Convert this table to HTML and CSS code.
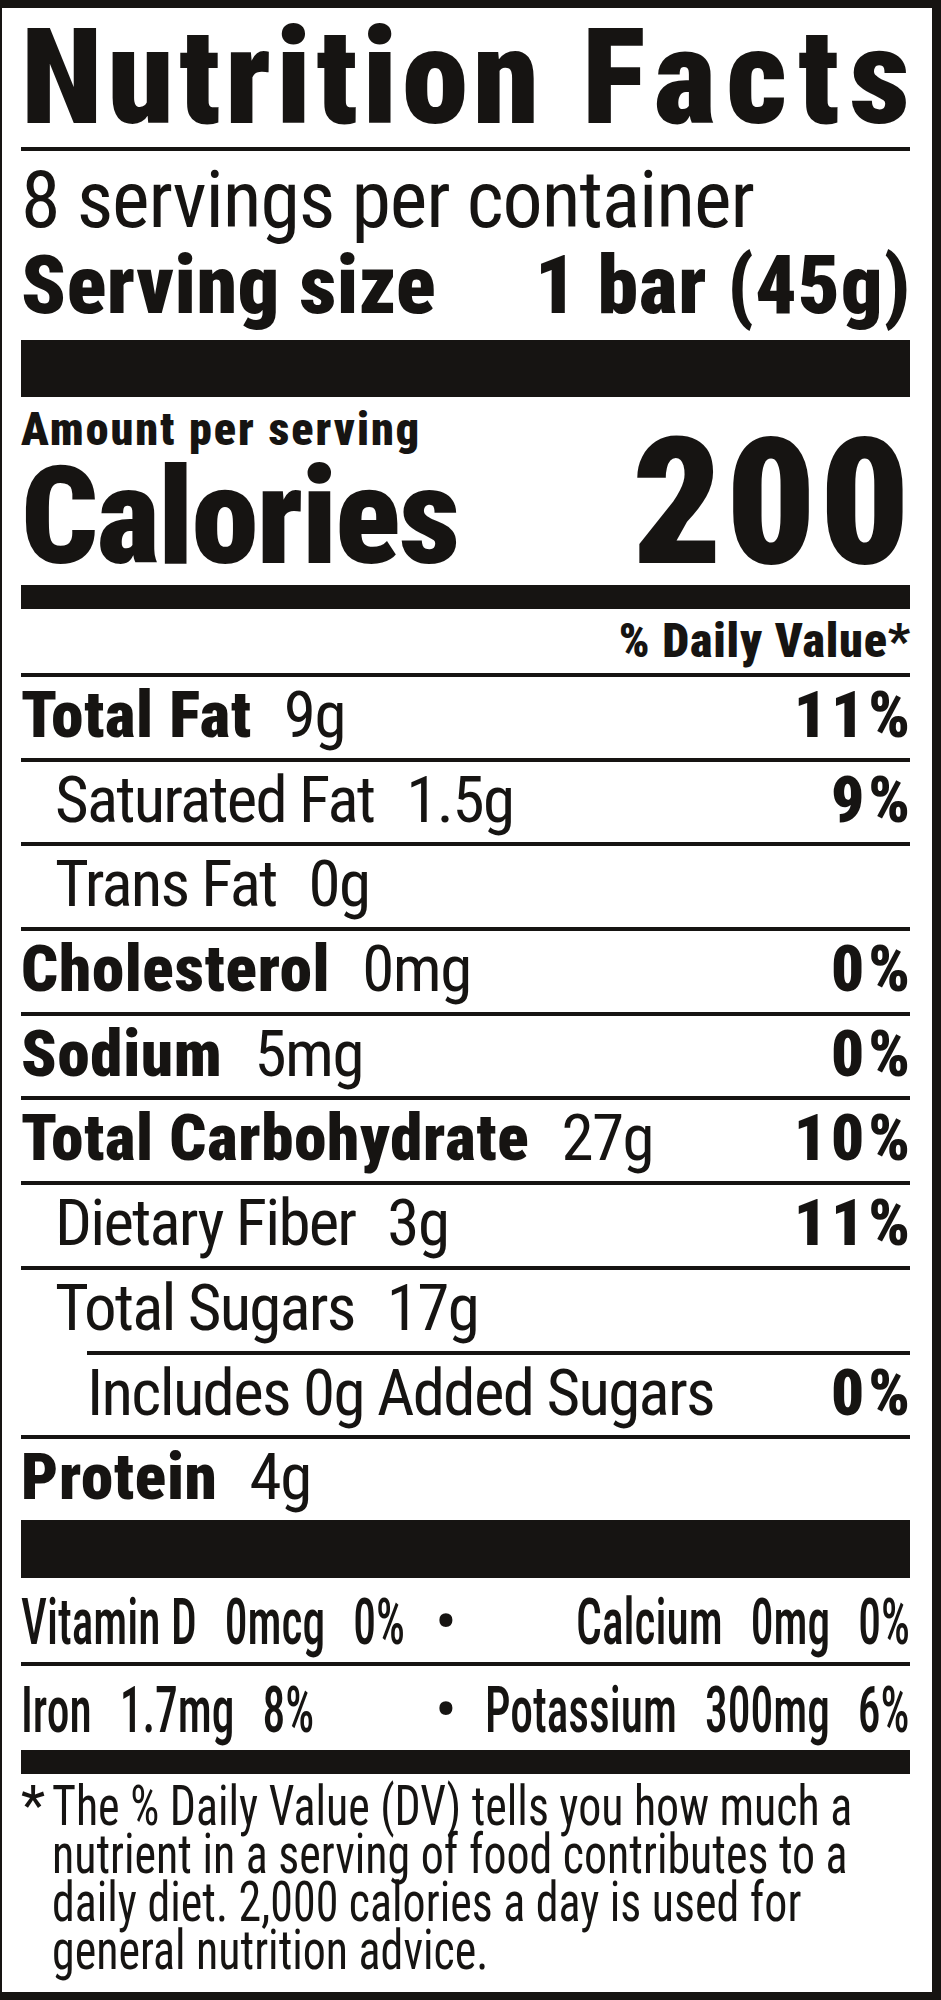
FILE: index.html
```html
<!DOCTYPE html>
<html lang="en">
<head>
<meta charset="utf-8">
<title>Nutrition Facts</title>
<link rel="stylesheet" href="styles.css">
</head>
<body>
<div class="label">
  <h1 class="title"><span class="t-left">Nutrition</span><span class="t-right">Facts</span></h1>
  <div class="rule"></div>
  <p class="servings">8 servings per container</p>
  <p class="serving-size"><span class="ss-left">Serving size</span><span class="ss-right">1 bar (45g)</span></p>
  <div class="bar bar-xl"></div>
  <p class="amount">Amount per serving</p>
  <div class="calories"><span class="cal-label">Calories</span><span class="cal-value">200</span></div>
  <div class="bar bar-md"></div>
  <p class="dv-head"><span>% Daily Value*</span></p>

  <div class="row"><b class="name">Total Fat</b><span class="amt">9g</span><b class="pct">11%</b></div>
  <div class="row sub"><span class="name">Saturated Fat</span><span class="amt">1.5g</span><b class="pct">9%</b></div>
  <div class="row sub"><span class="name">Trans Fat</span><span class="amt">0g</span></div>
  <div class="row"><b class="name">Cholesterol</b><span class="amt">0mg</span><b class="pct">0%</b></div>
  <div class="row"><b class="name">Sodium</b><span class="amt">5mg</span><b class="pct">0%</b></div>
  <div class="row"><b class="name">Total Carbohydrate</b><span class="amt">27g</span><b class="pct">10%</b></div>
  <div class="row sub"><span class="name">Dietary Fiber</span><span class="amt">3g</span><b class="pct">11%</b></div>
  <div class="row sub"><span class="name">Total Sugars</span><span class="amt">17g</span></div>
  <div class="row sub2"><span class="name name-tight">Includes 0g Added Sugars</span><b class="pct">0%</b></div>
  <div class="row"><b class="name">Protein</b><span class="amt">4g</span></div>
  <div class="bar bar-xl2"></div>

  <div class="vit">
    <div class="vcell"><span class="vtext"><span>Vitamin D</span><span>0mcg</span><span>0%</span></span></div>
    <span class="dot">•</span>
    <div class="vcell vright"><span class="vtext"><span>Calcium</span><span>0mg</span><span>0%</span></span></div>
  </div>
  <div class="vit vit-ruled">
    <div class="vcell"><span class="vtext"><span>Iron</span><span>1.7mg</span><span>8%</span></span></div>
    <span class="dot">•</span>
    <div class="vcell vright"><span class="vtext"><span>Potassium</span><span>300mg</span><span>6%</span></span></div>
  </div>
  <div class="bar bar-md"></div>

  <div class="foot"><span class="star">*</span><p class="foot-text">The % Daily Value (DV) tells you how much a<br>nutrient in a serving of food contributes to a<br>daily diet. 2,000 calories a day is used for<br>general nutrition advice.</p></div>
</div>
</body>
</html>
```
FILE: styles.css
```css
html, body {
  margin: 0;
  padding: 0;
  background: #fff;
}

.label {
  width: 941px;
  height: 2000px;
  box-sizing: border-box;
  border-style: solid;
  border-color: #161412;
  border-width: 8px 9px 8px 2px;
  padding: 0 22px 0 19px;
  background: #fff;
  color: #161412;
  font-family: Roboto, "Liberation Sans", sans-serif;
  font-weight: 400;
  font-stretch: 75%;
  overflow: hidden;
}

.label p, .label h1 { margin: 0; }

.title {
  display: flex;
  justify-content: space-between;
  font-size: 134px;
  line-height: 139px;
  font-weight: 900;
  white-space: nowrap;
}
.t-left { letter-spacing: 4.7px; }
.t-right { letter-spacing: 10px; margin-right: -10px; }

.rule { height: 4px; background: #161412; }

.servings {
  font-size: 80px;
  line-height: 99px;
  letter-spacing: -1.1px;
  white-space: nowrap;
}

.serving-size {
  display: flex;
  justify-content: space-between;
  font-size: 82px;
  line-height: 70px;
  font-weight: 900;
  white-space: nowrap;
}
.ss-left { letter-spacing: 0.5px; }
.ss-right { letter-spacing: 1px; margin-right: -1px; }

.bar { background: #161412; }
.bar-xl { height: 57px; margin-top: 20px; }
.bar-xl2 { height: 58px; }
.bar-md { height: 24px; }

.amount {
  font-size: 46px;
  line-height: 65px;
  font-weight: 900;
  letter-spacing: 2px;
}

.calories {
  display: flex;
  justify-content: space-between;
  align-items: flex-start;
  height: 110px;
  margin-bottom: 13px;
  font-weight: 900;
  white-space: nowrap;
}
.cal-label { font-size: 135px; line-height: 110px; letter-spacing: -1.6px; }
.cal-value { font-size: 177px; line-height: 81px; letter-spacing: 3.3px; margin-right: -3.3px; }

.dv-head {
  display: flex;
  justify-content: flex-end;
  font-size: 48px;
  line-height: 63px;
  padding-bottom: 1px;
  font-weight: 900;
}
.dv-head span { letter-spacing: 0.8px; margin-right: -0.8px; }

.row {
  display: flex;
  align-items: baseline;
  border-top: 4px solid #161412;
  font-size: 65px;
  line-height: 76px;
  padding-bottom: 4.7px;
  white-space: nowrap;
}
.row.sub { padding-left: 34px; }
.row.sub2 { margin-left: 66px; }
.row .name { letter-spacing: -1.8px; }
.row b.name { font-weight: 900; letter-spacing: 0.7px; }
.row .name-tight { letter-spacing: -1.7px; }
.row .amt { margin-left: 32px; letter-spacing: -1.5px; }
.row .pct { margin-left: auto; margin-right: -4px; font-weight: 900; letter-spacing: 4px; }

.vit {
  display: grid;
  grid-template-columns: 410px 30px minmax(0, 1fr);
  align-items: baseline;
  font-size: 65px;
  line-height: 80px;
  padding-top: 4px;
  white-space: nowrap;
}
.vit-ruled { border-top: 4px solid #161412; }
.vcell { display: flex; min-width: 0; }
.vright { justify-content: flex-end; }
.vtext {
  display: flex;
  flex: none;
  gap: 40px;
  font-weight: 500;
  transform: scaleX(0.7);
  transform-origin: left center;
}
.vright .vtext { transform-origin: right center; }
.dot { text-align: center; }

.foot {
  display: flex;
  padding-top: 8px;
  font-size: 56px;
  line-height: 48px;
  white-space: nowrap;
}
.star { width: 31px; flex: none; }
.foot-text {
  transform: scaleX(0.82);
  transform-origin: left top;
}
```
